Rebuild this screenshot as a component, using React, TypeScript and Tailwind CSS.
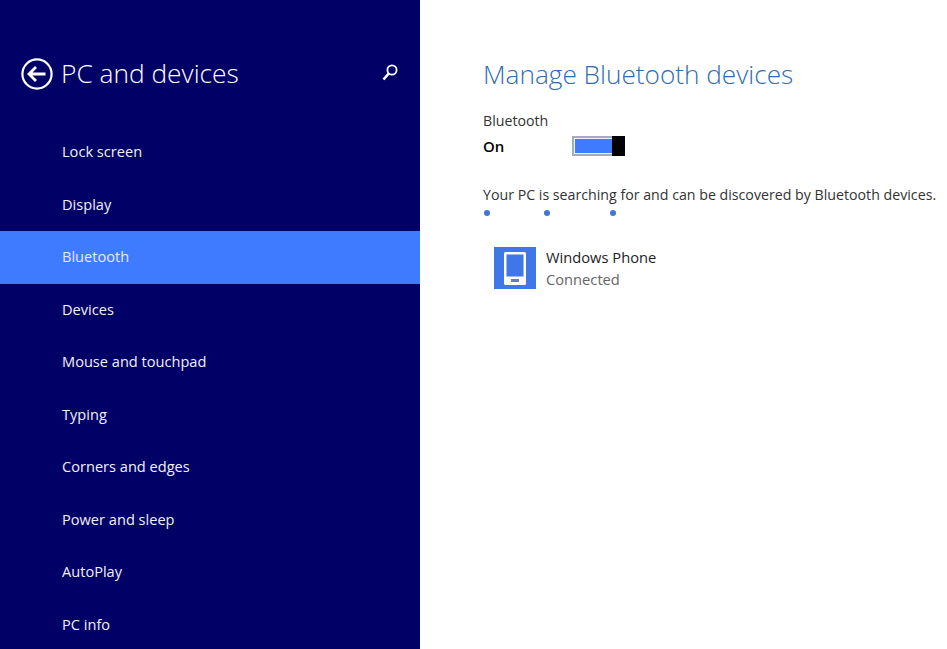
const menuItems = [
  "Lock screen",
  "Display",
  "Bluetooth",
  "Devices",
  "Mouse and touchpad",
  "Typing",
  "Corners and edges",
  "Power and sleep",
  "AutoPlay",
  "PC info",
];

function BackIcon() {
  return (
    <svg width="32" height="32" viewBox="0 0 32 32" fill="none" stroke="white" className="shrink-0">
      <circle cx="16" cy="16" r="14.6" strokeWidth="2.2" />
      <path d="M24.5 16H8.5M15 9 8 16l7 7" strokeWidth="2.8" />
    </svg>
  );
}

function SearchIcon() {
  return (
    <svg width="18" height="18" viewBox="0 0 18 18" fill="none" stroke="white">
      <circle cx="11" cy="6" r="4.6" strokeWidth="1.8" />
      <path d="M8 9.2 2.5 15.5" strokeWidth="2.6" />
    </svg>
  );
}

function PhoneIcon() {
  return (
    <div className="flex h-[42px] w-[42px] shrink-0 items-center justify-center bg-[#3f76e8]">
      <svg width="22" height="33" viewBox="0 0 22 33" fill="none">
        <rect x="0" y="0" width="22" height="33" rx="1.5" fill="white" />
        <rect x="2.5" y="2.5" width="17" height="22" fill="#3f76e8" />
        <rect x="7" y="27" width="8" height="3" fill="#5b7fc8" />
      </svg>
    </div>
  );
}

export default function App() {
  return (
    <div className="flex h-[649px] w-[947px] overflow-hidden bg-white font-['Open_Sans',sans-serif]">
      <aside className="flex h-full w-[420px] shrink-0 flex-col bg-[#000066] text-white">
        <div className="flex h-[126px] shrink-0 items-start pl-[21px] pr-[21px] pt-[58px]">
          <BackIcon />
          <h1 className="ml-[8px] mt-[-3px] text-[26.3px] font-light leading-[36px] text-white">PC and devices</h1>
          <div className="ml-auto mt-[6px]">
            <SearchIcon />
          </div>
        </div>
        <nav className="flex flex-col">
          {menuItems.map((item) => (
            <div
              key={item}
              className={
                item === "Bluetooth"
                  ? "flex h-[52.5px] items-center bg-[#3f7bff] pl-[62px] text-[14.6px] text-[#e4ecff]"
                  : "flex h-[52.5px] items-center pl-[62px] text-[14.6px] text-[#f0f0f8]"
              }
            >
              <span className="-mt-[0.5px]">{item}</span>
            </div>
          ))}
        </nav>
      </aside>

      <main className="min-w-0 flex-1 whitespace-nowrap pl-[63px] pt-[56px]">
        <h2 className="text-[26.2px] font-light leading-[36px] text-[#2f6db5]">Manage Bluetooth devices</h2>
        <div className="mt-[19px] text-[14.2px] leading-[20px] text-[#333]">Bluetooth</div>
        <div className="mt-[5px] flex items-center">
          <span className="w-[89px] text-[15px] font-semibold leading-[20px] text-black">On</span>
          <div className="flex h-[20px] w-[53px] border-2 border-r-0 border-[#a3adbd] bg-[#eef1fb] p-[1px] pr-0">
            <div className="flex-1 bg-[#3f7bff]" />
            <div className="my-[-3px] w-[13px] bg-black" />
          </div>
        </div>
        <p className="mt-[29px] text-[14.2px] leading-[20px] text-[#333]">
          Your PC is searching for and can be discovered by Bluetooth devices.
        </p>
        <div className="ml-[1px] mt-[5px] flex h-[6px] items-center">
          <span className="h-[6px] w-[6px] rounded-full bg-[#3f76d8]" />
          <span className="ml-[54px] h-[6px] w-[6px] rounded-full bg-[#3f76d8]" />
          <span className="ml-[60px] h-[6px] w-[6px] rounded-full bg-[#3f76d8]" />
        </div>
        <div className="ml-[11px] mt-[30px] flex items-center gap-[10px]">
          <PhoneIcon />
          <div>
            <div className="text-[14.7px] leading-[22px] text-[#222]">Windows Phone</div>
            <div className="text-[14.7px] leading-[22px] text-[#666]">Connected</div>
          </div>
        </div>
      </main>
    </div>
  );
}
